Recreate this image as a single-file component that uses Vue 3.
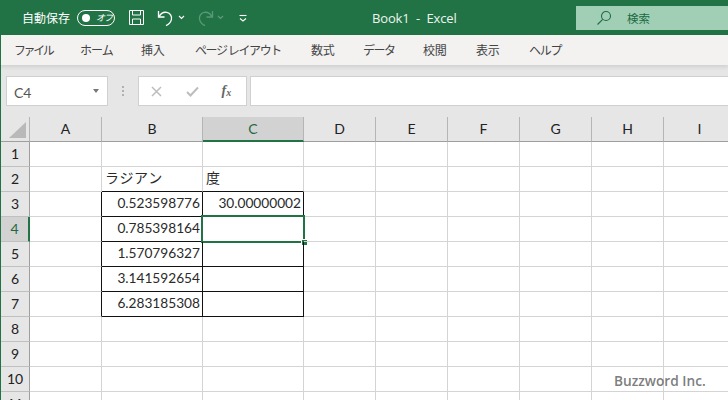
<script setup>
const tabs = [
  { label: 'ファイル', w: 66, ls: -2.4 },
  { label: 'ホーム', w: 61, ls: -0.9 },
  { label: '挿入', w: 54, ls: -0.2 },
  { label: 'ページ レイアウト', w: 116, ls: -1.4 },
  { label: '数式', w: 52, ls: -0.2 },
  { label: 'データ', w: 60, ls: -1.5 },
  { label: '校閲', w: 53, ls: -0.2 },
  { label: '表示', w: 53, ls: -0.2 },
  { label: 'ヘルプ', w: 60, ls: -1.2 }
]
const cols = ['A', 'B', 'C', 'D', 'E', 'F', 'G', 'H', 'I']
const rows = [1, 2, 3, 4, 5, 6, 7, 8, 9, 10, 11]
const values = {
  B2: 'ラジアン', C2: '度',
  B3: '0.523598776', C3: '30.00000002',
  B4: '0.785398164', B5: '1.570796327', B6: '3.141592654', B7: '6.283185308'
}
const isText = (id) => id === 'B2' || id === 'C2'
function cellClass(c, r) {
  const id = c + r
  const inBox = (c === 'B' || c === 'C') && r >= 3 && r <= 7
  return {
    cell: true,
    'cell-text': isText(id),
    'box-right': inBox || (c === 'A' && r >= 3 && r <= 7),
    'box-bottom': inBox || ((c === 'B' || c === 'C') && r === 2)
  }
}
</script>

<template>
  <div class="app">
    <header class="titlebar">
      <span class="autosave">自動保存</span>
      <span class="toggle"><i class="knob"></i><em>オフ</em></span>
      <svg class="ic save" width="17" height="17" viewBox="0 0 17 17" fill="none" stroke="#fff" stroke-width="1">
        <path d="M1.500 1.500h14v14h-14z" />
        <path d="M4.500 1.500v4.500h8v-4.500M4.500 15.500v-5.500h8v5.500" />
      </svg>
      <svg class="ic undo" width="17" height="18" viewBox="0 0 17 18" fill="none" stroke="#fff" stroke-width="1.300">
        <path d="M1.500 2v6h6" />
        <path d="M1.800 7.800C4 4 6.800 2.800 9.800 3.400c3.600.8 5.400 4 4.600 7.200-.6 2.400-2.400 4.600-5.400 6" />
      </svg>
      <svg class="ic caret" width="7" height="5" viewBox="0 0 7 5" fill="none" stroke="#fff" stroke-width="1.100"><path d="M1 1l2.500 2.500L6 1" /></svg>
      <svg class="ic redo" width="17" height="18" viewBox="0 0 17 18" fill="none" stroke="#5f9f7e" stroke-width="1.300">
        <path d="M15.500 2v6h-6" />
        <path d="M15.200 7.800C13 4 10.200 2.800 7.200 3.400 3.600 4.200 1.800 7.400 2.600 10.600c.6 2.400 2.400 4.600 5.400 6" />
      </svg>
      <svg class="ic caret2" width="7" height="5" viewBox="0 0 7 5" fill="none" stroke="#5f9f7e" stroke-width="1.100"><path d="M1 1l2.500 2.500L6 1" /></svg>
      <svg class="ic more" width="8" height="8" viewBox="0 0 8 8" fill="none" stroke="#fff" stroke-width="1.100">
        <path d="M.5 1.500h7" /><path d="M1 4.500l3 2.500 3-2.500" />
      </svg>
      <span class="doc">Book1&nbsp; - &nbsp;Excel</span>
      <div class="search">
        <svg width="16" height="16" viewBox="0 0 16 16" fill="none" stroke="#1f6b45" stroke-width="1.100">
          <circle cx="10" cy="6" r="4.500" /><path d="M6.700 9.300L1.500 14.500" />
        </svg>
        <span>検索</span>
      </div>
    </header>

    <nav class="ribbon">
      <span v-for="t in tabs" :key="t.label" class="tab" :style="{ width: t.w + 'px', letterSpacing: t.ls + 'px' }">{{ t.label }}</span>
    </nav>

    <section class="formula">
      <div class="namebox">
        <span>C4</span>
        <i class="namecaret"></i>
      </div>
      <div class="grip"><i></i><i></i><i></i></div>
      <div class="fx-buttons">
        <svg width="11" height="11" viewBox="0 0 11 11" fill="none" stroke="#bdbdbd" stroke-width="1.500"><path d="M1 1l9 9M10 1l-9 9" /></svg>
        <svg width="13" height="11" viewBox="0 0 13 11" fill="none" stroke="#bdbdbd" stroke-width="2"><path d="M1 6l3.500 3.500L12 1.500" /></svg>
        <span class="fx">f<sub>x</sub></span>
      </div>
      <div class="input"></div>
    </section>

    <section class="sheet">
      <div class="corner"><i></i></div>
      <div v-for="c in cols" :key="c" class="colhead" :class="{ active: c === 'C' }">{{ c }}</div>
      <template v-for="r in rows" :key="r">
        <div class="rowhead" :class="{ active: r === 4 }">{{ r }}</div>
        <div v-for="c in cols" :key="c + r" :class="cellClass(c, r)">
          {{ values[c + r] }}
          <div v-if="c + r === 'C4'" class="selection"><i></i></div>
        </div>
      </template>
    </section>

    <div class="watermark">Buzzword Inc.</div>
  </div>
</template>

<style>
html, body { margin: 0; padding: 0; overflow: hidden; background: #fff; }
</style>

<style scoped>
.app {
  position: relative;
  width: 728px;
  height: 400px;
  overflow: hidden;
  background: #e6e6e6;
  font-family: Lato, "Noto Sans CJK JP", sans-serif;
  color: #222;
}
.titlebar {
  height: 35px;
  background: #217346;
  color: #fff;
  display: flex;
  align-items: center;
  padding-left: 22px;
  box-sizing: border-box;
}
.titlebar > * { flex: none; }
.autosave { font: 12px "Noto Sans CJK JP", sans-serif; width: 55px; }
.toggle {
  box-sizing: border-box;
  width: 38px;
  height: 16px;
  border: 1px solid #fff;
  border-radius: 8px;
  display: flex;
  align-items: center;
  padding-left: 4px;
}
.knob { width: 8px; height: 8px; border-radius: 50%; background: #fff; }
.toggle em { font: italic 9px "Noto Sans CJK JP", sans-serif; margin-left: 6px; letter-spacing: -1px; }
.save { margin-left: 13px; }
.undo { margin-left: 12px; }
.caret { margin-left: 4px; }
.redo { margin-left: 12px; opacity: .9; }
.caret2 { margin-left: 3px; }
.more { margin-left: 15px; }
.doc { margin-left: 125px; font: 13px "Open Sans", sans-serif; letter-spacing: -.15px; width: 204px; color: #eef5f0; }
.search {
  width: 152px;
  height: 24px;
  align-self: flex-start;
  margin-top: 6px;
  background: #a0cfb5;
  color: #1b6a42;
  display: flex;
  align-items: center;
  padding-left: 20px;
  box-sizing: border-box;
  font: 11.500px "Noto Sans CJK JP", sans-serif;
}
.search svg { margin-right: 15px; }
.ribbon {
  height: 30px;
  background: #f3f2f1;
  border-left: 1px solid #217346;
  box-sizing: border-box;
  display: flex;
  align-items: center;
  padding: 0 0 2px 5px;
  box-shadow: 0 2px 4px rgba(0, 0, 0, .1);
  position: relative;
  font: 12px "Noto Sans CJK JP", sans-serif;
  color: #444;
}
.tab { padding-left: 8px; box-sizing: border-box; white-space: nowrap; flex: none; }
.formula {
  height: 52px;
  box-sizing: border-box;
  border-left: 1px solid #217346;
  padding: 11px 0 11px 5px;
  display: flex;
  background: #e6e6e6;
}
.namebox {
  box-sizing: border-box;
  width: 102px;
  background: #fff;
  border: 1px solid #d0d0d0;
  display: flex;
  align-items: center;
  justify-content: space-between;
  padding: 2px 8px 0 7px;
  font: 14px Lato, sans-serif;
  color: #555;
}
.namecaret { border: 3.500px solid transparent; border-top: 4px solid #777; border-bottom: 0; margin-top: -3px; }
.grip { width: 30px; display: flex; flex-direction: column; align-items: center; justify-content: center; gap: 2px; }
.grip i { width: 2px; height: 2px; background: #b0b0b0; }
.fx-buttons {
  box-sizing: border-box;
  width: 110px;
  background: #fff;
  border: 1px solid #d0d0d0;
  display: flex;
  align-items: center;
  padding-left: 12px;
  gap: 24px;
}
.fx { font: italic bold 14px "Liberation Serif", serif; color: #666; margin-left: -1px; }
.fx sub { font-size: 10px; vertical-align: -1px; }
.input {
  box-sizing: border-box;
  width: 480px;
  margin-left: 3px;
  background: #fff;
  border: 1px solid #d0d0d0;
  border-right: 0;
}
.sheet {
  display: grid;
  grid-template-columns: 29px 72px 101px 101px repeat(6, 72px);
  grid-auto-rows: 25px;
  background: #fff;
  border-left: 1px solid #217346;
  width: 760px;
}
.corner {
  background: #e6e6e6;
  border-right: 1px solid #b5b5b5;
  border-bottom: 1px solid #9f9f9f;
  box-sizing: border-box;
  position: relative;
}
.corner i {
  position: absolute;
  right: 3px;
  bottom: 3px;
  border-style: solid;
  border-width: 0 0 16px 17px;
  border-color: transparent transparent #b9b9b9 transparent;
}
.colhead {
  background: #e6e6e6;
  border-right: 1px solid #b5b5b5;
  border-bottom: 1px solid #9f9f9f;
  box-sizing: border-box;
  text-align: center;
  font-size: 14px;
  line-height: 23px;
}
.colhead.active {
  background: #d2d2d2;
  color: #1d6a41;
  border-bottom: 2px solid #217346;
}
.rowhead {
  background: #e6e6e6;
  border-right: 1px solid #9f9f9f;
  border-bottom: 1px solid #c0c0c0;
  box-sizing: border-box;
  text-align: center;
  font-size: 14px;
  line-height: 23px;
}
.rowhead.active {
  background: #d2d2d2;
  color: #1d6a41;
  border-right: 2px solid #217346;
}
.cell {
  position: relative;
  box-sizing: border-box;
  border-right: 1px solid #d4d4d4;
  border-bottom: 1px solid #d4d4d4;
  font-size: 13.700px;
  line-height: 22px;
  text-align: right;
  padding-right: 2px;
  color: #2a2a2a;
  white-space: nowrap;
}
.cell-text {
  text-align: left;
  padding-left: 3px;
  font: 14px/21px "Noto Sans CJK JP", sans-serif;
  letter-spacing: .7px;
}
.box-right { border-right-color: #111; }
.box-bottom { border-bottom-color: #111; }
.selection {
  position: absolute;
  left: -2px;
  top: -2px;
  right: -2px;
  bottom: -2px;
  border: 2px solid #217346;
}
.selection i {
  position: absolute;
  right: -4px;
  bottom: -4px;
  width: 5px;
  height: 5px;
  background: #217346;
  border: 1px solid #fff;
  border-width: 1px 0 0 1px;
}
.watermark {
  position: absolute;
  left: 614px;
  top: 371px;
  font: 600 13.700px "Open Sans", sans-serif;
  color: rgba(90, 90, 90, .8);
}
</style>
